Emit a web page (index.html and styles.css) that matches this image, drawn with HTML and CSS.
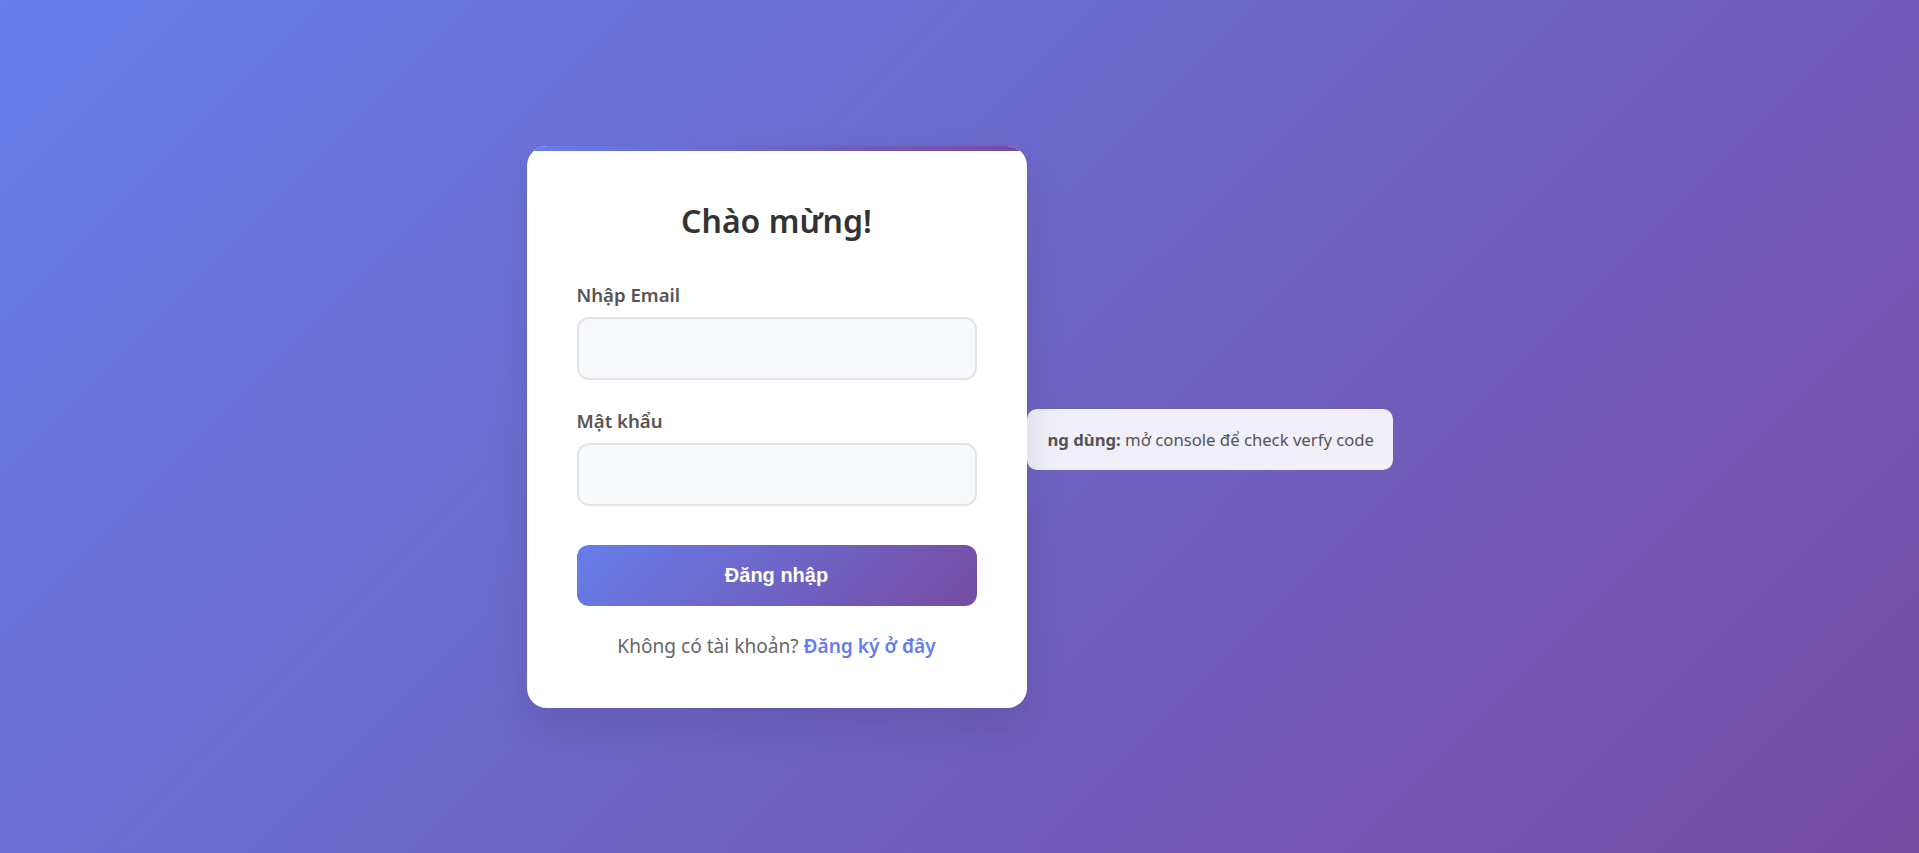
FILE: index.html
```html
<!DOCTYPE html>
<html lang="vi">
<head>
<meta charset="utf-8">
<title>Đăng nhập</title>
<link rel="stylesheet" href="styles.css">
</head>
<body>
<div class="stage">
  <div class="card">
    <h2 class="title">Chào mừng!</h2>
    <form class="form" onsubmit="return false">
      <div class="group">
        <label class="label" for="email">Nhập Email</label>
        <input class="input" id="email" type="email">
      </div>
      <div class="group group-last">
        <label class="label" for="pass">Mật khẩu</label>
        <input class="input" id="pass" type="password">
      </div>
      <button class="btn" type="submit">Đăng nhập</button>
    </form>
    <p class="foot">Không có tài khoản? <a class="link" href="#">Đăng ký ở đây</a></p>
  </div>
  <div class="toast"><strong class="toast-strong">ng dùng:</strong>&nbsp;mở console để check verfy code</div>
</div>
</body>
</html>
```
FILE: styles.css
```css
html, body {
  margin: 0;
  padding: 0;
}
body {
  font-family: "Noto Sans", "Open Sans", sans-serif;
  background: linear-gradient(135deg, #667eea 0%, #764ba2 100%);
  min-height: 100vh;
}
.stage {
  min-height: 100vh;
  display: flex;
  justify-content: center;
  align-items: center;
}
.card {
  position: relative;
  z-index: 1;
  overflow: hidden;
  box-sizing: border-box;
  width: 500px;
  padding: 53px 50px 50px;
  background: #fff;
  border-radius: 20px;
  box-shadow: 0 20px 40px rgba(0, 0, 0, 0.1);
}
.card::before {
  content: "";
  position: absolute;
  top: 0;
  left: 0;
  right: 0;
  height: 5px;
  background: linear-gradient(90deg, #667eea, #764ba2);
}
.title {
  margin: 0 0 40px;
  text-align: center;
  font-size: 32px;
  line-height: 44px;
  font-weight: 600;
  color: #333;
}
.form {
  margin: 0;
}
.group {
  margin-bottom: 29px;
}
.group-last {
  margin-bottom: 39px;
}
.label {
  display: block;
  margin-bottom: 10px;
  font-size: 18.6px;
  line-height: 24px;
  font-weight: 600;
  color: #555;
}
.input {
  display: block;
  box-sizing: border-box;
  width: 100%;
  height: 63px;
  padding: 0 18px;
  border: 2px solid #e1e5e9;
  border-radius: 12px;
  background: #f8f9fa;
  font-family: inherit;
  font-size: 18px;
  outline: none;
}
.btn {
  display: block;
  width: 100%;
  height: 61px;
  border: none;
  border-radius: 12px;
  background: linear-gradient(135deg, #667eea 0%, #764ba2 100%);
  color: #fff;
  font-family: "Liberation Sans", Arial, sans-serif;
  font-size: 20px;
  font-weight: 700;
  cursor: pointer;
}
.foot {
  margin: 28px 0 0;
  text-align: center;
  font-size: 19.1px;
  line-height: 24px;
  color: #666;
}
.link {
  color: #667eea;
  font-weight: 600;
  text-decoration: none;
}
.toast {
  box-sizing: border-box;
  width: 366px;
  height: 61px;
  margin-top: 25px;
  padding: 0 21px;
  display: flex;
  align-items: center;
  white-space: nowrap;
  overflow: hidden;
  background: rgba(255, 255, 255, 0.9);
  border-radius: 10px;
  font-size: 16.7px;
  color: #555;
}
.toast-strong {
  font-weight: 700;
  color: #555;
}
```
